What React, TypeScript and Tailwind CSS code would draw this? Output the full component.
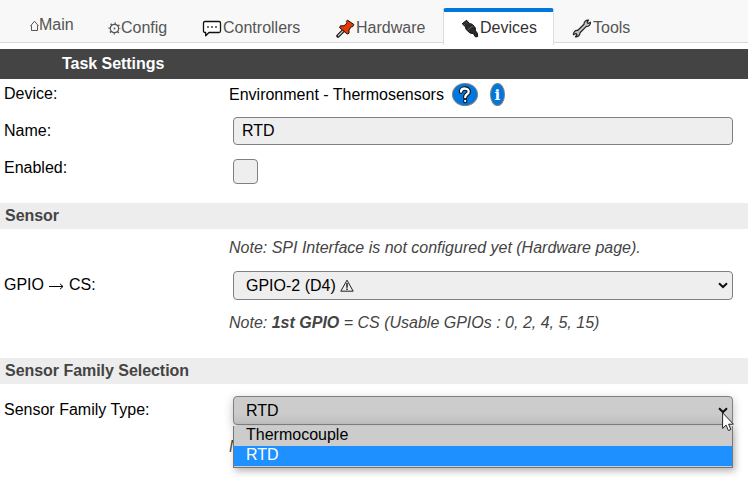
import type { ReactNode } from 'react';

function HouseIcon() {
  return (
    <svg width="9" height="11" viewBox="0 0 9 11" fill="none" stroke="#555" strokeWidth="1">
      <path d="M.3 6.2 4.5 1.2 8.7 6.2M1.5 5.5V10.5H7.5V5.5" />
    </svg>
  );
}

function GearIcon() {
  return (
    <svg width="13" height="13" viewBox="0 0 13 13" fill="none" stroke="#555">
      <circle cx="6.5" cy="6.5" r="4.2" strokeWidth="1.2" />
      <circle cx="6.5" cy="6.5" r="5.4" strokeWidth="1.4" strokeDasharray="1.5 2.741" strokeDashoffset=".75" />
      <circle cx="6.5" cy="6.5" r=".9" fill="#555" stroke="none" />
    </svg>
  );
}

function SpeechIcon() {
  return (
    <svg width="20" height="18" viewBox="0 0 20 18">
      <path d="M3 2.5H17Q18.5 2.5 18.5 4V12Q18.5 13.5 17 13.5H7L3.7 16.8V13.5H3Q1.5 13.5 1.5 12V4Q1.5 2.5 3 2.5Z" fill="#fff" stroke="#111" strokeWidth="1.3" strokeLinejoin="round" />
      <path d="M5.2 8H6.8M9.2 8H10.8M13.2 8H14.8" stroke="#111" strokeWidth="1.5" />
    </svg>
  );
}

function PinIcon() {
  return (
    <svg width="19" height="19" viewBox="0 0 19 19" strokeLinejoin="round">
      <path d="M7.5 11.5 2 17" stroke="#111" strokeWidth="3.4" strokeLinecap="round" />
      <path d="M7.5 11.5 2 17" stroke="#ccc" strokeWidth="1.2" />
      <path d="M11.4 1.1 17.9 5.5 16.6 7.8 15.2 7.8 13 11 13 14.2 11.3 15.1 3.6 8.7 4.4 6.8 8 6.8 11.1 3.8 10.4 2.5Z" fill="#e33b08" stroke="#221008" strokeWidth="1" />
    </svg>
  );
}

function PlugIcon() {
  return (
    <svg width="18" height="19" viewBox="0 0 18 19" strokeLinejoin="round">
      <path d="M1.2 4.7 5.6 1.3 8.4 4.4 11.5 5.4 14.3 8.9 14.5 11.7 16.3 14.2 16.7 17.6 14.4 17.9 12.5 14.7 9 14 5.2 10.6 4.3 7.7Z" fill="#292929" stroke="#111" strokeWidth="1" />
      <path d="M3 4.8 4 5.9M5 3.3 6 4.4M6.8 10.8 12 6.8" stroke="#777" strokeWidth=".8" />
    </svg>
  );
}

function WrenchIcon() {
  return (
    <svg width="20" height="19" viewBox="0 0 20 19" strokeLinejoin="round">
      <path d="M12 5.3C11.8 2.6 14 .9 16.6 1.2L15 3.2 16.2 4.5 18.5 3.2C18.6 5.9 16.7 7.6 14.4 7.4L8 13.7C8 16.2 6 18.1 3.4 17.9L5 15.7 3.9 14.4 1.4 15.8C1.2 13.2 3.2 11.2 5.6 11.5Z" fill="#c4c4c4" stroke="#222" strokeWidth="1.2" />
    </svg>
  );
}

function Chevron() {
  return (
    <svg width="10" height="7" viewBox="0 0 10 7" fill="none" stroke="#111" strokeWidth="2">
      <path d="M1 1.2 5 5 9 1.2" />
    </svg>
  );
}

function WarningIcon() {
  return (
    <svg width="14" height="13" viewBox="0 0 14 13" fill="none" stroke="#222">
      <path d="M7 1.2 13.2 12.2H.8Z" strokeWidth="1" />
      <path d="M7 4V8.7M7 9.6V11" strokeWidth="1.5" />
    </svg>
  );
}

function ArrowIcon() {
  return (
    <svg width="15" height="7" viewBox="0 0 15 7" fill="none" stroke="#000">
      <path d="M0 3.5H14M11 .8 14 3.5 11 6.2" />
    </svg>
  );
}

function Tab({ icon, children, className }: { icon: ReactNode; children: ReactNode; className: string }) {
  return (
    <div className={`flex h-[37px] shrink-0 items-center text-[#555] ${className}`}>
      {icon}
      <span>{children}</span>
    </div>
  );
}

function Section({ children }: { children: ReactNode }) {
  return <h2 className="h-[26px] bg-[#ededed] pl-[5px] font-bold leading-[25px] tracking-[-0.04px] text-[#444]">{children}</h2>;
}

export default function App() {
  return (
    <div className="relative h-[477px] w-[748px] overflow-hidden bg-white font-['Liberation_Sans',Arial,sans-serif] text-base leading-5 text-black">
      <nav className="flex h-[43px] items-start border-b border-[#d9d9d9] bg-[#f8f8f8] pt-2">
        <Tab icon={<HouseIcon />} className="ml-[30px] w-[78px] pb-[3px]">Main</Tab>
        <Tab icon={<GearIcon />} className="w-[94px] pt-[3px]">Config</Tab>
        <Tab icon={<SpeechIcon />} className="w-[134px] gap-px pt-[3px]">Controllers</Tab>
        <Tab icon={<PinIcon />} className="w-[107px] gap-px pt-[3px]">Hardware</Tab>
        <div className="flex h-[37px] w-[111px] shrink-0 items-center gap-px rounded-t-[3px] border-x border-t-4 border-x-[#ddd] border-t-[#0077dd] bg-white pb-px pl-[17px] text-[#333]">
          <PlugIcon />
          <span>Devices</span>
        </div>
        <Tab icon={<WrenchIcon />} className="ml-[18px] gap-px pt-[3px]">Tools</Tab>
      </nav>
      <h1 className="mt-1.5 h-[30px] bg-[#444] pl-[62px] font-bold leading-[29px] tracking-[-0.04px] text-white">Task Settings</h1>
      <div className="flex h-[38px]">
        <span className="w-[229px] pl-1 pt-[5px]">Device:</span>
        <div className="flex h-[31px] items-center">
          <span>Environment - Thermosensors</span>
          <span className="ml-2 flex h-[23px] w-[26px] items-center justify-center rounded-[50%] border border-[#808080] bg-[#0077dd]">
            <svg width="14" height="18" viewBox="0 0 14 18" fill="none" strokeLinecap="round" strokeLinejoin="round">
              <path d="M3 5.6C3.2 1.4 10.9 1.6 10.7 5.6C10.6 8.4 7.2 8.2 7.2 11.2" stroke="#111" strokeWidth="4.4" />
              <path d="M7.2 15V15.1" stroke="#111" strokeWidth="4.4" />
              <path d="M3 5.6C3.2 1.4 10.9 1.6 10.7 5.6C10.6 8.4 7.2 8.2 7.2 11.2" stroke="#fff" strokeWidth="2.3" />
              <path d="M7.2 15V15.1" stroke="#fff" strokeWidth="2.3" />
            </svg>
          </span>
          <span className="ml-3 flex h-[23px] w-[15px] items-center justify-center rounded-[50%] border border-[#808080] bg-[#0077dd] font-['DejaVu_Serif',serif] text-[15px] font-bold text-white">i</span>
        </div>
      </div>
      <div className="flex h-[42px]">
        <span className="w-[233px] pl-1 pt-1">Name:</span>
        <div className="h-7 w-[500px] rounded border border-[#808080] bg-[#eee] pl-2 leading-[26px]">RTD</div>
      </div>
      <div className="flex h-11">
        <span className="w-[233px] pl-1 leading-[18px]">Enabled:</span>
        <div className="size-[25px] rounded border border-[#808080] bg-[#eee]" />
      </div>
      <Section>Sensor</Section>
      <p className="h-[42px] pl-[229px] pt-[9px] italic text-[#444]">Note: SPI Interface is not configured yet (Hardware page).</p>
      <div className="flex h-[42px]">
        <div className="flex h-[27px] w-[233px] items-center pl-1"><span>GPIO</span><span className="ml-[5px] mr-[5px] mt-1"><ArrowIcon /></span><span>CS:</span></div>
        <div className="flex h-[29px] w-[500px] items-center rounded border border-[#808080] bg-[#eee] pl-3 pr-1">
          <span>GPIO-2 (D4)</span><span className="ml-1"><WarningIcon /></span>
          <span className="ml-auto"><Chevron /></span>
        </div>
      </div>
      <p className="h-[45px] pl-[229px] italic text-[#444]">Note: <b>1st GPIO</b> = CS (Usable GPIOs : 0, 2, 4, 5, 15)</p>
      <Section>Sensor Family Selection</Section>
      <div className="mt-3 flex h-[29px]">
        <span className="w-[233px] pl-1 pt-1">Sensor Family Type:</span>
        <div className="relative w-[500px]">
          <div className="flex h-[29px] items-center rounded border border-[#808080] bg-[#ccc] bg-linear-to-b from-[#ccc] from-60% to-[#bebebe] pl-3 pr-1 shadow-[0_3px_10px_rgba(0,0,0,0.25)]">
            <span>RTD</span>
            <span className="ml-auto"><Chevron /></span>
          </div>
          <div className="absolute left-0 top-[30px] z-10 h-[42px] w-[500px] border-x border-b border-[#777] bg-[#ccc] shadow-[2px_3px_7px_rgba(0,0,0,0.3)]">
            <div className="h-5 pl-3 leading-[18px]">Thermocouple</div>
            <div className="h-5 bg-[#1e90ff] pl-3 leading-[18px] text-white">RTD</div>
          </div>
          <svg className="absolute left-[489px] top-[16px] z-20" width="12" height="20" viewBox="0 0 12 20">
            <path d="M.6.8V16.4L4.1 13.1 6.4 18.5 8.9 17.5 6.6 12.2H11.4Z" fill="#fff" stroke="#222" strokeWidth="1" />
          </svg>
        </div>
      </div>
      <p className="mt-3 pl-[229px] italic text-[#444]">N</p>
    </div>
  );
}
